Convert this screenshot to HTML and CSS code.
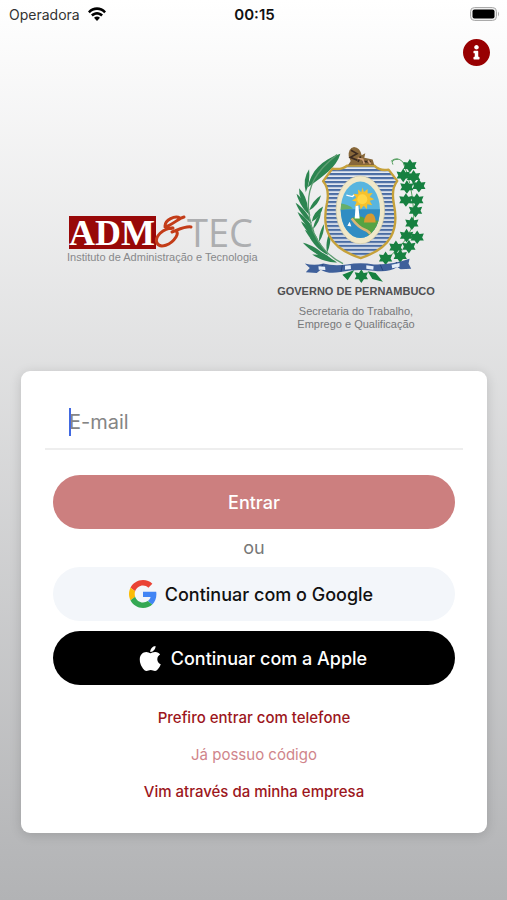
FILE: index.html
```html
<!DOCTYPE html>
<html lang="pt-BR">
<head>
<meta charset="utf-8">
<meta name="viewport" content="width=device-width, initial-scale=1">
<title>Entrar</title>
<link rel="stylesheet" href="styles.css">
</head>
<body>
<div class="status">
  <div class="carrier">
    <span>Operadora</span>
    <svg width="18" height="14" viewBox="0 0 18 14" aria-hidden="true"><path d="M0 4.4C5-1.2 13-1.2 18 4.4L16.2 6.3C12.2 2 5.8 2 1.8 6.300ZM3 7.600C6.600 4 11.400 4 15 7.600L13.200 9.500C10.800 7.200 7.200 7.200 4.800 9.500ZM6 10.800C8 9.200 10 9.200 12 10.800L9 14Z"/></svg>
  </div>
  <time class="clock">00:15</time>
  <svg class="battery" width="30" height="14" viewBox="0 0 30 14" aria-hidden="true"><rect x=".5" y=".5" width="26" height="13" rx="4" fill="#eee" stroke="#aaa"/><rect x="2.500" y="2.500" width="22" height="9" rx="2"/><path d="M28 4.500q2 2.500 0 5z" fill="#aaa"/></svg>
</div>
<header class="toolbar">
  <button class="info" type="button" aria-label="Informações">
    <svg viewBox="8 8 496 496" width="27" height="27" aria-hidden="true"><circle cx="256" cy="256" r="240" fill="#fff"/><path fill="#980002" d="M256 8C119.043 8 8 119.083 8 256c0 136.997 111.043 248 248 248s248-111.003 248-248C504 119.083 392.957 8 256 8zm0 110c23.196 0 42 18.804 42 42s-18.804 42-42 42-42-18.804-42-42 18.804-42 42-42zm56 254c0 6.627-5.373 12-12 12h-88c-6.627 0-12-5.373-12-12v-24c0-6.627 5.373-12 12-12h12v-64h-12c-6.627 0-12-5.373-12-12v-24c0-6.627 5.373-12 12-12h64c6.627 0 12 5.373 12 12v100h12c6.627 0 12 5.373 12 12v24z"/></svg>
  </button>
</header>
<main>
  <div class="brands">
    <svg class="admtec" width="192" height="56" viewBox="0 0 192 56" role="img" aria-label="ADM&amp;TEC">
      <rect x="2" y="4" width="87" height="33" fill="#980808"/>
      <text class="adm" x="2" y="33">ADM</text>
      <text class="tec" x="120" y="35">TEC</text>
      <path d="M113 6C108 3 98 8 98 14C98 18 106 16 106 16C96 16 87 25 90 31C93 37 104 33 109 25C112 20 109 17 105 20M105 20C113 17 119 14 124 15M98 15C107 12 112 6 117 5" fill="none" stroke="#c33c18" stroke-width="3" stroke-linecap="round" stroke-linejoin="round"/>
      <text class="tag" x="0" y="49">Instituto de Administração e Tecnologia</text>
    </svg>
    <div class="gov">
      <svg width="150" height="143" viewBox="-8 0 450 430" aria-hidden="true">
        <defs>
          <pattern id="bands" width="12" height="12" patternUnits="userSpaceOnUse"><rect width="12" height="12" fill="#f1f4f8"/><rect y="3" width="12" height="7" fill="#496ca3"/></pattern>
          <clipPath id="oval"><ellipse cx="230" cy="210" rx="59" ry="85"/></clipPath>
          <path id="ivy" d="M0-20L7-9L20-11L15 1L20 10L8 10L0 21L-8 10L-20 10L-15 1L-20-11L-7-9Z"/>
          <path id="blade" d="M0 0C-16-12-34-36-42-66C-22-50-6-26 0 0Z"/>
        </defs>
        <g fill="#2c8550">
          <path d="M72 142C82 94 112 60 170 41C158 82 119 108 72 142Z"/>
          <path d="M76 88Q56 116 66 157Q80 124 76 88Z"/>
          <path d="M46 145Q44 180 72 206Q70 170 46 145ZM112 166Q86 182 76 212Q104 196 112 166ZM118 200Q88 216 84 246Q112 232 118 200Z"/>
          <use href="#blade" transform="translate(80 228)"/>
          <use href="#blade" transform="translate(84 250) rotate(-6)"/>
          <use href="#blade" transform="translate(92 276) rotate(-8)"/>
          <use href="#blade" transform="translate(104 302) rotate(-10)"/>
          <use href="#blade" transform="translate(118 326) rotate(-12)"/>
          <use href="#blade" transform="translate(134 346) rotate(-14)"/>
          <use href="#blade" transform="translate(124 350) rotate(-26)"/>
          <use href="#blade" transform="translate(150 364) rotate(-30)"/>
          <use href="#blade" transform="translate(160 368) rotate(-40)"/>
          <use href="#blade" transform="translate(88 268) rotate(58) scale(.7)"/>
          <use href="#blade" transform="translate(106 306) rotate(48) scale(.7)"/>
          <use href="#blade" transform="translate(130 338) rotate(40) scale(.8)"/>
        </g>
        <path d="M160 44C96 94 70 140 74 205C78 280 114 340 178 372" fill="none" stroke="#5d9d71" stroke-width="4"/>
        <path d="M322 64Q340 48 358 66Q384 126 390 208Q400 292 300 364M328 74Q320 58 344 58" fill="none" stroke="#57a061" stroke-width="3"/>
        <g fill="#168040">
          <use href="#ivy" x="379" y="77"/><use href="#ivy" x="359" y="106"/><use href="#ivy" x="390" y="110"/>
          <use href="#ivy" x="370" y="141"/><use href="#ivy" x="406" y="137"/><use href="#ivy" x="367" y="180"/>
          <use href="#ivy" x="400" y="180"/><use href="#ivy" x="396" y="212"/>
          <use href="#ivy" x="385" y="250"/><use href="#ivy" x="369" y="287"/><use href="#ivy" x="401" y="292"/>
          <use href="#ivy" x="337" y="322"/><use href="#ivy" x="376" y="320"/><use href="#ivy" x="306" y="355"/>
          <use href="#ivy" x="350" y="348"/><use href="#ivy" x="233" y="409"/>
          <path d="M176 405L212 391L192 422ZM252 395L276 400L298 426L266 418Z"/>
        </g>
        <path d="M146 86Q175 91 190 77H272Q289 94 315 89L341 123Q322 146 331 193C346 266 327 324 231 355C132 324 113 264 130 188Q138 147 118 124Z" fill="url(#bands)" stroke="#c6a13a" stroke-width="7" stroke-linejoin="round"/>
        <ellipse cx="230" cy="210" rx="73" ry="102" fill="#f0e8c9" stroke="#d5cba5" stroke-width="2"/>
        <g clip-path="url(#oval)">
          <path fill="#58b5df" d="M165 120h130v180H165z"/>
          <path fill="#308dc3" d="M165 208h130v95H165z"/>
          <path fill="#66af69" d="M165 190Q191 193 208 206L165 211Z"/>
          <path fill="#55a343" d="M202 235Q230 222 248 238L296 244V302H263Q254 271 205 239Z"/>
          <path d="M204 236Q226 264 242 269T266 292" fill="none" stroke="#dab777" stroke-width="8"/>
          <path fill="#d69b32" d="M241 248Q243 218 264 221Q276 225 276 248Z"/>
          <path fill="#fff" d="M213 236L216 197H224L228 236ZM191 258l7-12 5 14z"/>
          <path d="M188 166l18 4 6-5" stroke="#fff" stroke-width="4" fill="none"/>
        </g>
        <path fill="#f6c12c" d="M236 143l5 13 11-9v14l15-2-9 12 14 7-14 5 8 13-15-3-1 15-10-10-9 11-3-14-15 5 6-14-14-4 13-8-9-12 15 1-1-14 10 8z"/>
        <circle cx="236" cy="178" r="15" fill="#ffd746"/>
        <path fill="#88683a" d="M193 76L201 63L195 49Q193 25 211 21Q229 22 234 46L245 40L242 53L267 59L272 75Z"/>
        <path d="M202 31l18 10-20 11 21 9M231 49l-8 17M236 65h25" stroke="#3c2b20" stroke-width="5" fill="none"/>
        <path d="M222 55l15 3 5 13M253 62l8 10" stroke="#d1a078" stroke-width="5" fill="none"/>
        <path fill="#3f609b" d="M63 371Q92 379 119 371Q150 380 190 374Q231 367 271 374Q325 376 378 357L375 371L383 387L351 389L341 382Q313 400 270 393Q218 387 170 397Q132 404 111 390L99 400L66 398L78 385Z"/>
        <path d="M118 373l-8 17M338 367l3 15M176 376l-4 20M290 375l8 18" stroke="#25437a" stroke-width="3"/>
        <path fill="#e4edf8" d="M104 380l20 1 1 10-20-1zM184 378l17-1 1 11-18 2zM248 377l22 3-1 10-21-3zM324 375l24-5v11l-22 5z"/>
      </svg>
      <strong class="gov-name">GOVERNO DE PERNAMBUCO</strong>
      <span class="gov-unit">Secretaria do Trabalho,<br>Emprego e Qualificação</span>
    </div>
  </div>
  <form class="card">
    <div class="field">
      <span class="caret"></span>
      <input class="email" type="email" placeholder="E-mail" aria-label="E-mail">
    </div>
    <button class="btn enter" type="submit">Entrar</button>
    <span class="or">ou</span>
    <button class="btn google" type="button">
      <svg width="28" height="28" viewBox="0 0 48 48" aria-hidden="true"><path fill="#ea4335" d="M24 9.500c3.540 0 6.710 1.220 9.210 3.600l6.850-6.850C35.900 2.380 30.470 0 24 0 14.620 0 6.510 5.380 2.560 13.220l7.980 6.190C12.430 13.720 17.740 9.500 24 9.500z"/><path fill="#4285f4" d="M46.980 24.550c0-1.570-.15-3.090-.38-4.550H24v9.020h12.940c-.58 2.960-2.260 5.480-4.780 7.180l7.730 6c4.510-4.180 7.090-10.360 7.090-17.650z"/><path fill="#fbbc05" d="M10.530 28.590c-.48-1.450-.76-2.990-.76-4.590s.27-3.140.76-4.590l-7.980-6.190C.92 16.460 0 20.120 0 24c0 3.880.92 7.540 2.560 10.780l7.970-6.190z"/><path fill="#34a853" d="M24 48c6.480 0 11.930-2.130 15.890-5.810l-7.730-6c-2.150 1.450-4.920 2.300-8.160 2.300-6.260 0-11.570-4.220-13.470-9.910l-7.980 6.190C6.510 42.620 14.620 48 24 48z"/></svg>
      <span>Continuar com o Google</span>
    </button>
    <button class="btn apple" type="button">
      <svg width="22" height="25" viewBox="4 32 367 448" aria-hidden="true"><path fill="#fff" d="M318.700 268.700c-.2-36.700 16.400-64.400 50-84.800-18.800-26.900-47.200-41.700-84.700-44.600-35.500-2.800-74.300 20.700-88.500 20.700-15 0-49.400-19.700-76.400-19.700C63.300 141.200 4 184.800 4 273.500q0 39.300 14.400 81.200c12.800 36.700 59 126.700 107.200 125.200 25.200-.6 43-17.900 75.800-17.900 31.800 0 48.300 17.900 76.400 17.900 48.600-.7 90.400-82.500 102.600-119.300-65.200-30.700-61.700-90-61.700-91.900zm-56.600-164.200c27.300-32.400 24.800-61.900 24-72.500-24.100 1.400-52 16.400-67.900 34.900-17.500 19.800-27.800 44.300-25.600 71.900 26.100 2 49.900-11.400 69.500-34.300z"/></svg>
      <span>Continuar com a Apple</span>
    </button>
    <nav class="links">
      <a href="#telefone">Prefiro entrar com telefone</a>
      <a class="muted" href="#codigo">Já possuo código</a>
      <a href="#empresa">Vim através da minha empresa</a>
    </nav>
  </form>
</main>
</body>
</html>
```

FILE: styles.css
```css
* { box-sizing: border-box; }
body {
  margin: 0;
  min-height: 100vh;
  font-family: Inter, "Liberation Sans", sans-serif;
  color: #111;
  background: linear-gradient(#fff, #b2b3b5) no-repeat;
}
button { border: 0; padding: 0; font: inherit; cursor: pointer; }
svg { display: block; flex: none; }
.status {
  display: grid;
  grid-template-columns: 1fr auto 1fr;
  align-items: center;
  height: 28px;
  padding: 0 7px 0 9px;
  font-size: 15px;
}
.carrier { display: flex; align-items: center; gap: 8px; font-size: 14px; color: #333; }
.carrier svg { fill: #000; }
.clock { font-weight: 600; }
.battery { justify-self: end; }
.toolbar { display: flex; justify-content: flex-end; padding: 11px 17px 0; }
.info { border-radius: 50%; background: none; }
.brands {
  display: flex;
  justify-content: center;
  align-items: center;
  gap: 18px;
  padding: 74px 5px 0 0;
}
.admtec { margin-top: 8px; }
.adm { font: bold 36px "Liberation Serif", serif; fill: #fff; }
.tec { font: 38px "Open Sans", sans-serif; fill: #adaeb0; }
.tag { font: 11px "Liberation Sans", sans-serif; fill: #87888a; }
.gov {
  display: flex;
  flex-direction: column;
  align-items: center;
  font-family: "Liberation Sans", sans-serif;
  text-align: center;
}
.gov-name { margin-bottom: 6px; font-size: 11px; line-height: 16px; color: #4e4f51; white-space: nowrap; }
.gov-unit { font-size: 11px; line-height: 13px; color: #77787a; }
.card {
  display: flex;
  flex-direction: column;
  margin: 40px 20px 64px 21px;
  padding: 24px;
  border-radius: 9px;
  background: #fff;
  box-shadow: 0 2px 12px rgba(0, 0, 0, .15);
}
.field { position: relative; margin-bottom: 25px; }
.email {
  display: block;
  width: 100%;
  height: 55px;
  padding: 0 24px;
  border: 0;
  border-bottom: 2px solid #eee;
  outline: 0;
  background: none;
  font: 20px Inter, "Liberation Sans", sans-serif;
}
.email::placeholder { color: #858585; opacity: 1; }
.caret { position: absolute; left: 24px; top: 13px; width: 2px; height: 28px; background: #4169e1; }
.btn {
  display: flex;
  align-items: center;
  justify-content: center;
  gap: 8px;
  height: 54px;
  margin: 0 8px;
  border-radius: 27px;
  font-size: 18px;
  font-weight: 500;
}
.enter { background: #cc7f7f; color: #fff; }
.or { line-height: 38px; text-align: center; font-size: 18px; color: #777; }
.google { padding-right: 6px; background: #f3f6fa; color: #111; }
.apple { margin-top: 10px; padding-right: 2px; background: #000; color: #fff; gap: 10px; }
.links { display: flex; flex-direction: column; align-items: center; margin-top: 14px; margin-bottom: -1px; }
.links a { font-size: 15px; line-height: 37px; font-weight: 500; color: #9c1620; text-decoration: none; }
.links .muted { color: #d0858b; font-weight: 400; }
```
